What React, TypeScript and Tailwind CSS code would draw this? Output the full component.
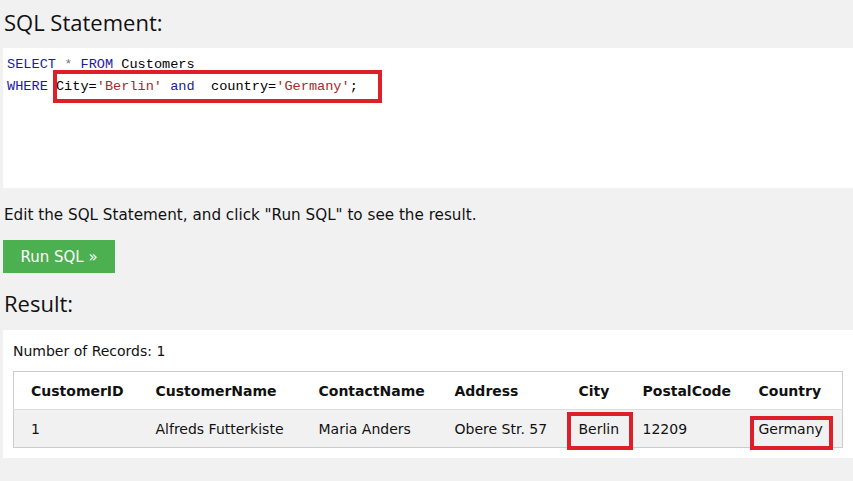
import React from "react";

const body = { fontFamily: '"DejaVu Sans", Verdana, sans-serif' };
const head = { fontFamily: '"Open Sans", "Noto Sans", sans-serif' };
const mono = { fontFamily: '"Liberation Mono", "DejaVu Sans Mono", monospace' };

const cols = [
  { h: "CustomerID", v: "1", w: 134, pl: 17 },
  { h: "CustomerName", v: "Alfreds Futterkiste", w: 163, pl: 8 },
  { h: "ContactName", v: "Maria Anders", w: 136, pl: 8 },
  { h: "Address", v: "Obere Str. 57", w: 124, pl: 8 },
  { h: "City", v: "Berlin", w: 64, pl: 8, box: "berlin" },
  { h: "PostalCode", v: "12209", w: 116, pl: 8 },
  { h: "Country", v: "Germany", w: 92, pl: 8, box: "germany" },
];

export default function App() {
  return (
    <div className="w-[853px] h-[481px] bg-[#f1f1f1] overflow-hidden text-black" style={body}>
      <h2 className="pl-[4px] pt-[7px] h-[48px] text-[22px] leading-[30px] text-[#111]" style={head}>
        SQL Statement:
      </h2>
      <div className="ml-[3px] bg-white h-[140px] pt-[6px] pl-[4px] text-[13.6px] leading-[22px]" style={mono}>
        <div>
          <span className="text-[#1a1aa6]">SELECT</span> <span className="text-[#777]">*</span>{" "}
          <span className="text-[#1a1aa6]">FROM</span> Customers
        </div>
        <div className="whitespace-pre">
          <span className="text-[#1a1aa6]">WHERE </span>
          <span className="relative">
            City=<span className="text-[#a52a2a]">'Berlin'</span> <span className="text-[#1a1aa6]">and</span>  country=
            <span className="text-[#a52a2a]">'Germany'</span>;
            <span className="absolute left-[-3px] top-[-9px] w-[329px] h-[33px] border-4 border-[#dd1f2a]" />
          </span>
        </div>
      </div>
      <p className="pl-[4px] pt-[16px] h-[52px] text-[15.2px] leading-[22px] text-[#111]">
        Edit the SQL Statement, and click "Run SQL" to see the result.
      </p>
      <div className="pl-[3px]">
        <button className="w-[112px] h-[33px] bg-[#4caf50] text-white text-[15px] leading-[35px] text-center" style={body}>
          Run SQL »
        </button>
      </div>
      <h2 className="pl-[4px] pt-[14px] h-[57px] text-[22px] leading-[32px] text-[#111]" style={head}>
        Result:
      </h2>
      <div className="ml-[3px] bg-white h-[128px] pt-[12px] pl-[10px] text-[14px]">
        <div className="h-[29px] leading-[18px] text-[#111]">Number of Records: 1</div>
        <table className="border-collapse border border-[#ccc] text-[14px] text-[#111]">
          <tbody>
            <tr className="bg-white h-[38px]">
              {cols.map((c) => (
                <th key={c.h} className="text-left font-bold pr-[8px] pt-[2px]" style={{ width: c.w, paddingLeft: c.pl }}>
                  {c.h}
                </th>
              ))}
            </tr>
            <tr className="bg-[#f1f1f1] h-[38px] border-t border-[#ddd]">
              {cols.map((c) => (
                <td key={c.h} className="pr-[8px] pt-[2px]" style={{ width: c.w, paddingLeft: c.pl }}>
                  <span className="relative">
                    {c.v}
                    {c.box === "berlin" && (
                      <span className="absolute left-[-12px] top-[-9px] w-[66px] h-[38px] border-4 border-[#dd1f2a]" />
                    )}
                    {c.box === "germany" && (
                      <span className="absolute left-[-9px] top-[-5px] w-[83px] h-[34px] border-4 border-[#dd1f2a]" />
                    )}
                  </span>
                </td>
              ))}
            </tr>
          </tbody>
        </table>
      </div>
    </div>
  );
}
